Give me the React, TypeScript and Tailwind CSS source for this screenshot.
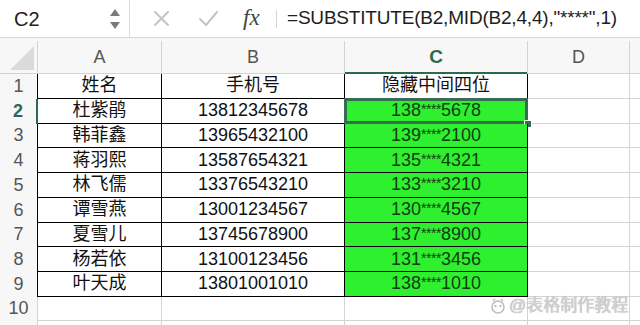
import React from "react";

const font = { fontFamily: '"Liberation Sans", "Noto Sans CJK SC", sans-serif' };

const rows = [
  { name: "姓名", phone: "手机号", masked: "隐藏中间四位", head: true },
  { name: "杜紫鹃", phone: "13812345678", masked: "138****5678" },
  { name: "韩菲鑫", phone: "13965432100", masked: "139****2100" },
  { name: "蒋羽熙", phone: "13587654321", masked: "135****4321" },
  { name: "林飞儒", phone: "13376543210", masked: "133****3210" },
  { name: "谭雪燕", phone: "13001234567", masked: "130****4567" },
  { name: "夏雪儿", phone: "13745678900", masked: "137****8900" },
  { name: "杨若依", phone: "13100123456", masked: "131****3456" },
  { name: "叶天成", phone: "13801001010", masked: "138****1010" },
];

// renders 138****5678 with the small stars like the sheet does
const Masked = ({ text }: { text: string }) => {
  const parts = text.split("****");
  if (parts.length < 2) return <>{text}</>;
  return (
    <>
      {parts[0]}
      <span className="text-[14px] tracking-[-0.5px] relative -top-[1px]">****</span>
      {parts[1]}
    </>
  );
};

const FormulaBar = () => (
  <div className="h-[38px] flex items-center bg-white border-b border-[#d6d6d6]">
    <div className="w-[130px] h-full flex items-center justify-between pl-[14px] pr-[9px] border-r border-[#dcdcdc]">
      <span className="text-[20px] text-[#222]">C2</span>
      <div className="flex flex-col gap-[6px] items-center">
        <svg width="10" height="7" viewBox="0 0 10 7"><path d="M5 0 L10 7 L0 7 Z" fill="#7a7a7a" /></svg>
        <svg width="10" height="7" viewBox="0 0 10 7"><path d="M0 0 L10 0 L5 7 Z" fill="#7a7a7a" /></svg>
      </div>
    </div>
    <div className="w-[146px] h-full flex items-center pl-[23px]">
      <svg width="17" height="17" viewBox="0 0 17 17" className="mr-[28px]">
        <path d="M2 2 L15 15 M15 2 L2 15" stroke="#c4c4c4" strokeWidth="2" strokeLinecap="round" />
      </svg>
      <svg width="21" height="17" viewBox="0 0 21 17" className="mr-[24px]">
        <path d="M2 9 L8 15 L19 2" stroke="#c4c4c4" strokeWidth="2" fill="none" strokeLinecap="round" strokeLinejoin="round" />
      </svg>
      <span
        className="text-[23px] italic text-[#444] leading-none -mt-[3px]"
        style={{ fontFamily: '"Liberation Serif", serif' }}
      >
        fx
      </span>
    </div>
    <div className="w-px h-[18px] bg-[#d4d4d4]" />
    <div className="pl-[10px] text-[19px] tracking-[-0.2px] text-[#1d1d1d] whitespace-nowrap">
      =SUBSTITUTE(B2,MID(B2,4,4),"****",1)
    </div>
  </div>
);

const HeaderRow = () => (
  <div className="flex h-[36px] pt-[3px] bg-[#f7f7f7] border-b border-[#d4d4d4]">
    <div className="w-[38px] border-r border-[#d4d4d4] flex items-end justify-end pb-[3px] pr-[3px]">
      <svg width="24" height="24" viewBox="0 0 24 24"><path d="M0 24 L24 24 L24 0 Z" fill="#dadada" /></svg>
    </div>
    <div className="w-[124px] border-r border-[#d4d4d4] flex items-center justify-center text-[18px] text-[#555]">A</div>
    <div className="w-[183px] border-r border-[#d4d4d4] flex items-center justify-center text-[18px] text-[#555]">B</div>
    <div className="w-[183px] border-r border-[#d4d4d4] flex items-center justify-center text-[19px] font-bold text-[#2d6a4d] relative">
      C
      <div className="absolute left-0 right-0 -bottom-[1px] h-[2px] bg-[#2d6a4d]" />
    </div>
    <div className="w-[102px] border-r border-[#d4d4d4] flex items-center justify-center text-[18px] text-[#555]">D</div>
    <div className="flex-1" />
  </div>
);

const DataRow = ({ r, i }: { r: (typeof rows)[number]; i: number }) => {
  const active = i === 1;
  return (
    <div className="flex h-[24.75px]">
      <div
        className={
          "w-[38px] flex items-center justify-center text-[18px] bg-[#f7f7f7] " +
          (active ? "border-r-2 border-[#2d6a4d] font-bold text-[#2d6a4d]" : "border-r border-black text-[#555]")
        }
      >
        {i + 1}
      </div>
      <div className="w-[124px] border-r border-b border-black flex items-center justify-center text-[18px] text-[#111]">
        {r.name}
      </div>
      <div className="w-[183px] border-r border-b border-black flex items-center justify-center text-[18px] text-[#111]">
        {r.phone}
      </div>
      <div
        className={
          "w-[183px] border-r border-b border-black flex items-center justify-center text-[18px] relative " +
          (r.head ? "bg-white text-[#111]" : "bg-[#2ef02e] text-[#143c14]")
        }
      >
        {r.head ? r.masked : <Masked text={r.masked} />}
        {active && (
          <>
            <div className="absolute -left-[1px] -top-[1px] -right-[1px] -bottom-[1px] border-[3px] border-[#386b52]" />
            <div className="absolute -right-[5px] -bottom-[5px] w-[8px] h-[8px] bg-[#386b52] border border-white" />
          </>
        )}
      </div>
      <div className="w-[102px] border-r border-b border-[#d4d4d4]" />
      <div className="flex-1 border-b border-[#d4d4d4]" />
    </div>
  );
};

const EmptyRow = ({ n }: { n?: number }) => (
  <div className="flex h-[24px]">
    <div className="w-[38px] flex items-center justify-center text-[18px] bg-[#f7f7f7] border-r border-[#d4d4d4] text-[#555]">
      {n}
    </div>
    <div className="w-[124px] border-r border-b border-[#d4d4d4]" />
    <div className="w-[183px] border-r border-b border-[#d4d4d4]" />
    <div className="w-[183px] border-r border-b border-[#d4d4d4]" />
    <div className="w-[102px] border-r border-b border-[#d4d4d4]" />
    <div className="flex-1 border-b border-[#d4d4d4]" />
  </div>
);

export default function App() {
  return (
    <div className="w-[640px] h-[325px] overflow-hidden bg-white relative" style={font}>
      <FormulaBar />
      <HeaderRow />
      {rows.map((r, i) => (
        <DataRow key={i} r={r} i={i} />
      ))}
      <EmptyRow n={10} />
      <EmptyRow />

      {/* watermark */}
      <div className="absolute left-[489px] top-[293px] flex items-center gap-[2px] text-[17px] text-[#d2d2d2] [text-shadow:0_0_1px_#9a9a9a]">
        <svg width="18" height="18" viewBox="0 0 18 18">
          <circle cx="9" cy="10" r="6" fill="none" stroke="#bdbdbd" strokeWidth="1.6" />
          <circle cx="6.5" cy="9" r="1.2" fill="#bdbdbd" />
          <circle cx="11.5" cy="9" r="1.2" fill="#bdbdbd" />
          <path d="M4 4 L6 2 M14 4 L12 2" stroke="#bdbdbd" strokeWidth="1.4" />
        </svg>
        <span>@表格制作教程</span>
      </div>
    </div>
  );
}
